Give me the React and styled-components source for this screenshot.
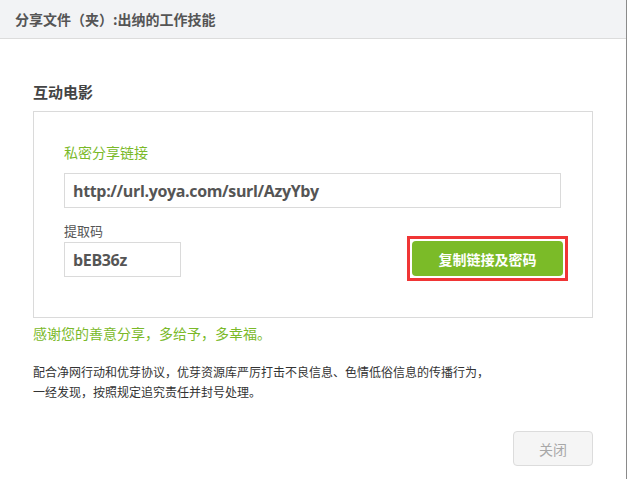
import React from 'react';
import styled, { createGlobalStyle } from 'styled-components';

const GlobalStyle = createGlobalStyle`
  body {
    margin: 0;
    background: #ffffff;
    font-family: "Noto Sans CJK SC", "Noto Sans", sans-serif;
  }
`;

const Dialog = styled.div`
  width: 627px;
  height: 479px;
  box-sizing: border-box;
  border-right: 1px solid #8a8a8a;
  background: #fff;
`;

const Header = styled.div`
  height: 38px;
  border-bottom: 1px solid #dcdcdc;
  background: #f2f3f5;
  display: flex;
  align-items: center;
  padding-left: 15px;
  font-size: 14px;
  font-weight: bold;
  color: #555;
`;

const Body = styled.div`
  padding: 42px 0 0 33px;
`;

const Title = styled.div`
  font-size: 15px;
  font-weight: bold;
  color: #444;
  line-height: 22px;
  height: 22px;
`;

const LinkBox = styled.div`
  margin-top: 8px;
  width: 560px;
  height: 207px;
  box-sizing: border-box;
  border: 1px solid #dadada;
  padding: 30px 0 0 30px;
`;

const GreenLabel = styled.div`
  font-size: 14px;
  line-height: 20px;
  color: #7ab929;
`;

const Field = styled.div`
  width: ${p => p.$width}px;
  height: 35px;
  box-sizing: border-box;
  border: 1px solid #dadada;
  display: flex;
  align-items: center;
  padding-left: 8px;
  font-family: "Open Sans", "Noto Sans", sans-serif;
  font-size: 16px;
  font-weight: bold;
  color: #555;
  letter-spacing: -0.35px;
`;

const UrlField = styled(Field)`
  margin-top: 11px;
`;

const CodeRow = styled.div`
  margin-top: 14px;
  width: 504px;
  display: flex;
  justify-content: space-between;
  align-items: flex-end;
`;

const SmallLabel = styled.div`
  font-size: 13px;
  line-height: 18px;
  color: #555;
  margin-bottom: 2px;
`;

const Highlight = styled.div`
  border: 3px solid #f03535;
  padding: 2px;
  margin-bottom: -4px;
  display: flex;
`;

const CopyButton = styled.button`
  width: 151px;
  height: 35px;
  border: none;
  border-radius: 4px;
  background: #7bbb28;
  color: #fff;
  font-family: "Noto Sans CJK SC", sans-serif;
  font-size: 14px;
  font-weight: bold;
`;

const Thanks = styled.div`
  margin-top: 5px;
  font-size: 14px;
  line-height: 20px;
  color: #7ab929;
`;

const Notice = styled.p`
  margin: 19px 0 0;
  font-size: 12px;
  line-height: 19.5px;
  color: #333;
`;

const Footer = styled.div`
  width: 560px;
  display: flex;
  justify-content: flex-end;
  margin-top: 30px;
`;

const CloseButton = styled.button`
  width: 80px;
  height: 35px;
  border: 1px solid #dcdcdc;
  border-radius: 4px;
  background: #f5f5f5;
  color: #a8a8a8;
  font-family: "Noto Sans CJK SC", sans-serif;
  font-size: 14px;
`;

export default function App() {
  return (
    <Dialog>
      <GlobalStyle />
      <Header>分享文件（夹）:出纳的工作技能</Header>
      <Body>
        <Title>互动电影</Title>
        <LinkBox>
          <GreenLabel>私密分享链接</GreenLabel>
          <UrlField $width={497}>http://url.yoya.com/surl/AzyYby</UrlField>
          <CodeRow>
            <div>
              <SmallLabel>提取码</SmallLabel>
              <Field $width={117}>bEB36z</Field>
            </div>
            <Highlight>
              <CopyButton>复制链接及密码</CopyButton>
            </Highlight>
          </CodeRow>
        </LinkBox>
        <Thanks>感谢您的善意分享，多给予，多幸福。</Thanks>
        <Notice>
          配合净网行动和优芽协议，优芽资源库严厉打击不良信息、色情低俗信息的传播行为，
          <br />
          一经发现，按照规定追究责任并封号处理。
        </Notice>
        <Footer>
          <CloseButton>关闭</CloseButton>
        </Footer>
      </Body>
    </Dialog>
  );
}
